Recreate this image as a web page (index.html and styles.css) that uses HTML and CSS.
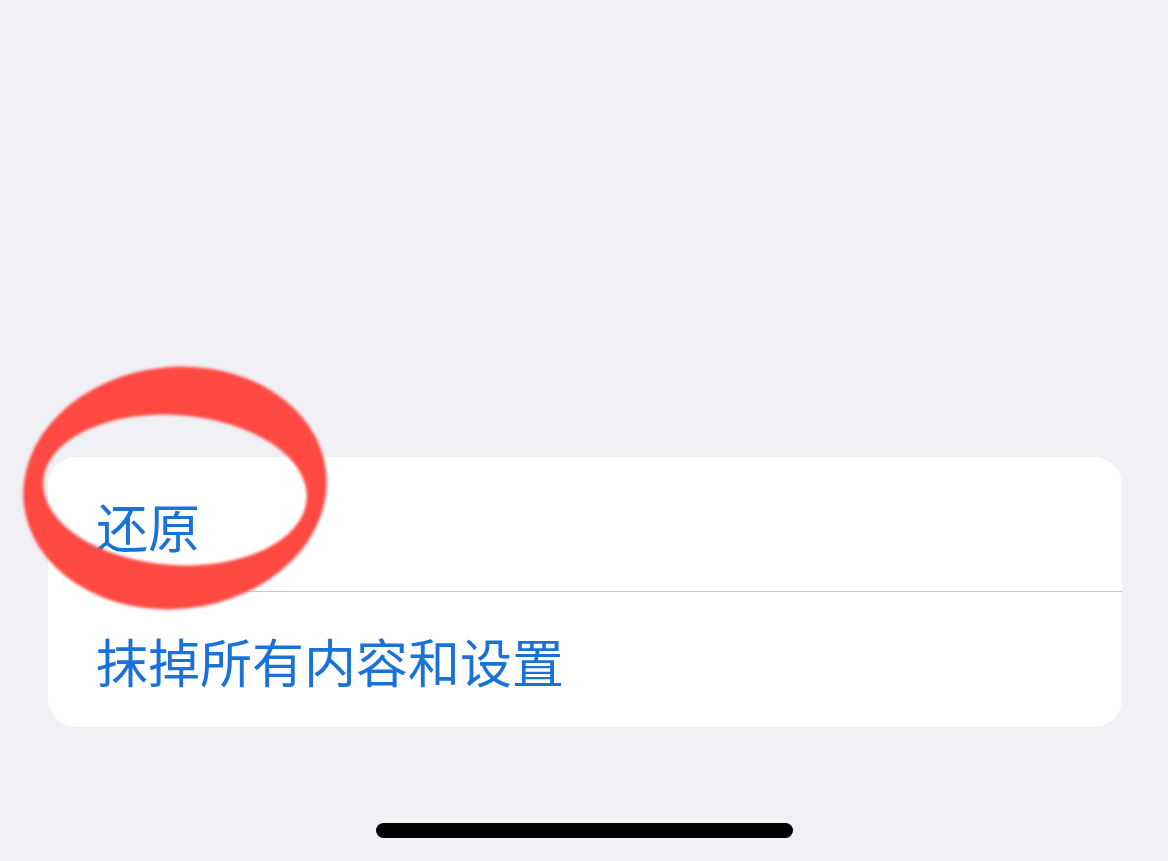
FILE: index.html
```html
<!DOCTYPE html>
<html lang="zh-CN">
<head>
    <meta charset="UTF-8">
    <meta name="viewport" content="width=device-width, initial-scale=1.0">
    <title>还原</title>
    <link rel="stylesheet" href="styles.css">
</head>
<body>
    <div class="screen">
        <div class="card">
            <div class="row first"><span>还原</span></div>
            <div class="row"><span>抹掉所有内容和设置</span></div>
        </div>

        <div class="home-bar"></div>

        <!-- hand-drawn marker ring over the first row -->
        <svg class="mark" width="360" height="300" viewBox="0 0 360 300">
            <defs>
                <mask id="ring">
                    <ellipse cx="175" cy="148" rx="152" ry="121" fill="#fff" transform="rotate(-6 175 148)"/>
                    <ellipse cx="175" cy="150" rx="132" ry="75" fill="#000" transform="rotate(4 175 150)"/>
                </mask>
                <filter id="soft" x="-10%" y="-10%" width="120%" height="120%">
                    <feGaussianBlur stdDeviation="1.8"/>
                </filter>
            </defs>
            <g filter="url(#soft)">
                <rect width="360" height="300" fill="#ff4a43" mask="url(#ring)"/>
            </g>
        </svg>
    </div>
</body>
</html>
```

FILE: styles.css
```css
body {
    margin: 0;
    background-color: #f0f0f5;
    font-family: "Noto Sans CJK SC", "Noto Sans", sans-serif;
}

.screen {
    position: relative;
    height: 861px;
    padding-top: 457px;
    box-sizing: border-box;
    display: flex;
    flex-direction: column;
    align-items: center;
    overflow: hidden;
}

.card {
    width: 1074px;
    margin-left: 2px;
    background-color: #fff;
    border-radius: 28px;
}

.row {
    height: 135px;
    display: flex;
    align-items: center;
    padding-left: 48px;
    box-sizing: border-box;
    font-size: 52px;
    line-height: 1;
    color: #1a72d8;
}

.row span {
    margin-top: 2px;
}

.row.first {
    position: relative;
}

.row.first::after {
    content: "";
    position: absolute;
    left: 50px;
    right: 0;
    bottom: 0;
    height: 1px;
    background-color: #c6c6c8;
}

.home-bar {
    width: 417px;
    height: 15px;
    margin-top: 96px;
    background-color: #000;
    border-radius: 8px;
}

.mark {
    position: absolute;
    left: 0;
    top: 340px;
}
```
